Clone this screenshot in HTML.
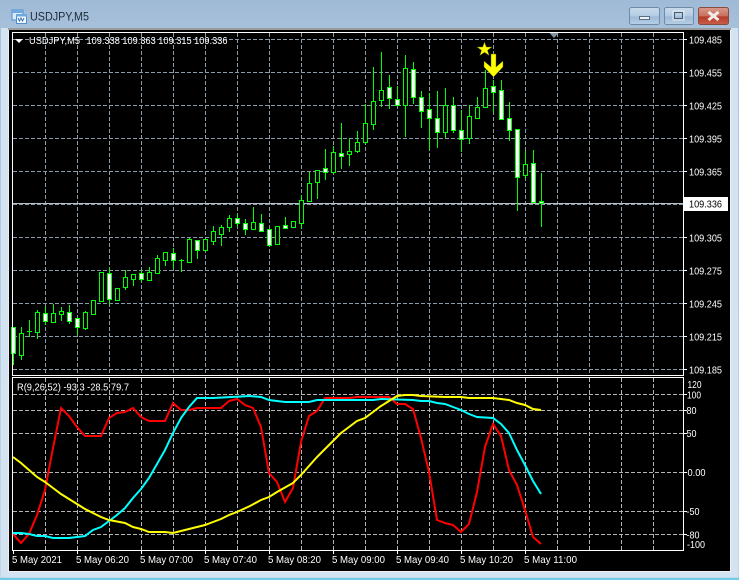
<!DOCTYPE html>
<html><head><meta charset="utf-8"><style>
html,body{margin:0;padding:0;background:#fff}
svg{display:block;font-family:"Liberation Sans",sans-serif}
text{font-size:10.5px;fill:#fff}
</style></head><body>
<svg width="741" height="580" viewBox="0 0 741 580" xmlns="http://www.w3.org/2000/svg">
<defs>
<linearGradient id="tb" x1="0" y1="0" x2="0" y2="1"><stop offset="0" stop-color="#9fbad6"/><stop offset=".06" stop-color="#a9c2dc"/><stop offset="1" stop-color="#c3d7ec"/></linearGradient>
<linearGradient id="bt" x1="0" y1="0" x2="0" y2="1"><stop offset="0" stop-color="#c9dbec"/><stop offset=".5" stop-color="#b3cbe2"/><stop offset=".55" stop-color="#9db9d6"/><stop offset="1" stop-color="#b8d0e6"/></linearGradient>
<linearGradient id="cl" x1="0" y1="0" x2="0" y2="1"><stop offset="0" stop-color="#d99a8c"/><stop offset=".5" stop-color="#c8705e"/><stop offset=".55" stop-color="#b43a26"/><stop offset="1" stop-color="#c9604c"/></linearGradient>
</defs>
<rect width="741" height="580" fill="#fff"/>
<rect x="0" y="0" width="739" height="578" fill="url(#tb)"/>
<rect x="0" y="578" width="739" height="2" fill="#6fcbe6"/>
<rect x="1" y="28" width="737" height="549" fill="#d3e3f2"/>
<rect x="8" y="28" width="723" height="2" fill="#9a9a9a"/>
<rect x="8" y="30" width="723" height="542" fill="#f0f0f0"/>
<rect x="9" y="30" width="721" height="541" fill="#000"/>

<!-- title icon -->
<g>
<rect x="12" y="10" width="11" height="10" fill="#dbe9f8" stroke="#4d8fd0"/>
<rect x="12" y="10" width="11" height="3" fill="#6fa8e0"/>
<rect x="16.500" y="14.500" width="10" height="9" fill="#f4f8fd" stroke="#4d8fd0"/>
<rect x="16" y="14" width="11" height="2.500" fill="#6fa8e0"/>
<path d="M18 18l1.500 3 1.500-3 1.500 3 1.500-3" fill="none" stroke="#3a78b8"/>
</g>
<text x="30" y="20.500" style="font-size:12px;fill:#1c2b3c" textLength="59" lengthAdjust="spacingAndGlyphs">USDJPY,M5</text>

<!-- window buttons -->
<rect x="629.500" y="7.500" width="30" height="17" rx="2" fill="url(#bt)" stroke="#6f8aa8"/>
<rect x="639.500" y="16.500" width="10" height="3" fill="#eef2f6" stroke="#5a6e84"/>
<rect x="664.500" y="7.500" width="29" height="17" rx="2" fill="url(#bt)" stroke="#6f8aa8"/>
<rect x="674.500" y="12.500" width="8" height="6" fill="none" stroke="#4a5a6c" stroke-width="1"/>
<rect x="673" y="11" width="11" height="9" fill="none" stroke="#eef2f6" stroke-width=".8"/>
<rect x="698.500" y="7.500" width="30" height="17" rx="2" fill="url(#cl)" stroke="#8a4a44"/>
<path d="M708.500 12l10 8M718.500 12l-10 8" stroke="#f2ece8" stroke-width="3"/>

<!-- main grid -->
<path d="M13 39.500H683M13 72.500H683M13 105.500H683M13 138.500H683M13 171.500H683M13 204.500H683M13 237.500H683M13 270.500H683M13 303.500H683M13 336.500H683M13 369.500H683" stroke="#8a9aaa" stroke-dasharray="4 2" fill="none"/>
<path d="M45.500 33V375M77.500 33V375M109.500 33V375M141.500 33V375M173.500 33V375M205.500 33V375M237.500 33V375M269.500 33V375M301.500 33V375M333.500 33V375M365.500 33V375M397.500 33V375M429.500 33V375M461.500 33V375M493.500 33V375M525.500 33V375M557.500 33V375M589.500 33V375M621.500 33V375M653.500 33V375" stroke="#8a9aaa" stroke-dasharray="4 2" fill="none"/>

<!-- price line -->
<path d="M13 203.500H683" stroke="#b8c0c8"/>

<!-- wicks -->
<path d="M13.500 327V365M21.500 327V360M29.500 320V337M37.500 310V339M45.500 306V325M53.500 304V323M61.500 307V321M69.500 305V324M77.500 318V335M85.500 311V330M93.500 300V314M101.500 272V301M109.500 268V305M117.500 288V300M125.500 270V290M133.500 274V286M141.500 270V282M149.500 267V280M157.500 255V273M165.500 252V266M173.500 248V269M181.500 259V272M189.500 238V262M197.500 240V259M205.500 239V250M213.500 226V245M221.500 225V246M229.500 215V232M237.500 214V227M245.500 219V235M253.500 207V229M261.500 214V231M269.500 229V247M277.500 226V244M285.500 217V228M293.500 221V227M301.500 195V229M309.500 172V201M317.500 170V199M325.500 149V180M333.500 146V172M341.500 123V169M349.500 138V166M357.500 131V153M365.500 104V144M373.500 67V130M381.500 52V107M389.500 75V109M397.500 86V105M405.500 55V137M413.500 62V104M421.500 91V128M429.500 93V150M437.500 91V148M445.500 88V138M453.500 97V133M461.500 110V152M469.500 105V144M477.500 97V119M485.500 70V107M493.500 80V113M501.500 80V119M509.500 102V141M517.500 129V211M525.500 151V179M533.500 150V202M541.500 173V227" stroke="#00ff00" fill="none"/>

<!-- bull bodies -->
<path d="M19.500 333.500h4V355.500h-4zM35.500 312.500h4V332.500h-4zM51.500 313.500h4V322.500h-4zM59.500 311.500h4V314.500h-4zM83.500 312.500h4V328.500h-4zM91.500 300.500h4V314.500h-4zM99.500 272.500h4V301.500h-4zM115.500 288.500h4V300.500h-4zM123.500 277.500h4V287.500h-4zM131.500 274.500h4V279.500h-4zM147.500 272.500h4V280.500h-4zM155.500 258.500h4V273.500h-4zM163.500 252.500h4V260.500h-4zM187.500 239.500h4V262.500h-4zM203.500 239.500h4V250.500h-4zM211.500 231.500h4V241.500h-4zM219.500 227.500h4V234.500h-4zM227.500 218.500h4V227.500h-4zM251.500 222.500h4V229.500h-4zM275.500 226.500h4V244.500h-4zM291.500 221.500h4V227.500h-4zM299.500 200.500h4V223.500h-4zM307.500 183.500h4V201.500h-4zM315.500 170.500h4V182.500h-4zM331.500 152.500h4V172.500h-4zM347.500 151.500h4V154.500h-4zM355.500 142.500h4V151.500h-4zM363.500 123.500h4V142.500h-4zM371.500 101.500h4V124.500h-4zM379.500 90.500h4V100.500h-4zM403.500 68.500h4V105.500h-4zM443.500 105.500h4V132.500h-4zM467.500 116.500h4V138.500h-4zM475.500 107.500h4V118.500h-4zM483.500 88.500h4V107.500h-4zM523.500 164.500h4V175.500h-4z" fill="#000" stroke="#00ff00"/>
<!-- bear bodies -->
<path d="M11.500 327.500h4V353.500h-4zM43.500 313.500h4V321.500h-4zM67.500 312.500h4V321.500h-4zM75.500 318.500h4V327.500h-4zM107.500 273.500h4V299.500h-4zM139.500 273.500h4V279.500h-4zM171.500 253.500h4V260.500h-4zM195.500 240.500h4V250.500h-4zM235.500 218.500h4V223.500h-4zM243.500 223.500h4V229.500h-4zM259.500 223.500h4V231.500h-4zM267.500 229.500h4V245.500h-4zM283.500 225.500h4V228.500h-4zM323.500 168.500h4V172.500h-4zM339.500 153.500h4V156.500h-4zM387.500 87.500h4V98.500h-4zM395.500 99.500h4V105.500h-4zM411.500 69.500h4V97.500h-4zM419.500 97.500h4V111.500h-4zM427.500 109.500h4V118.500h-4zM435.500 118.500h4V132.500h-4zM451.500 105.500h4V130.500h-4zM459.500 130.500h4V139.500h-4zM491.500 86.500h4V92.500h-4zM499.500 90.500h4V119.500h-4zM507.500 118.500h4V130.500h-4zM515.500 129.500h4V177.500h-4zM531.500 163.500h4V202.500h-4zM539.500 201.500h4V203.500h-4z" fill="#fff" stroke="#00ff00"/>
<!-- dojis -->
<path d="M27 331.500h5M179 260.500h5" stroke="#00ff00"/>

<!-- star & arrow -->
<polygon points="484.500,42 486.300,47 492,47 487.500,50.300 489.200,55.500 484.500,52.300 479.800,55.500 481.500,50.300 477,47 482.700,47" fill="#ffff00" stroke="#5a5a00" stroke-width=".4"/>
<polygon points="491,54 496,54 496,67 503,61 503,67 493.500,77 484,67 484,61 491,67" fill="#ffff00" stroke="#5a5a00" stroke-width=".4"/>

<!-- triangles -->
<polygon points="549.500,33 558.500,33 554,38" fill="#8493a2"/>
<polygon points="15,39 23,39 19,43" fill="#fff"/>

<!-- main frame -->
<rect x="12.500" y="32.500" width="671" height="343" fill="none" stroke="#fff"/>
<path d="M684 39.500h3M684 72.500h3M684 105.500h3M684 138.500h3M684 171.500h3M684 237.500h3M684 270.500h3M684 303.500h3M684 336.500h3M684 369.500h3" stroke="#fff"/>
<text x="29" y="44" textLength="51" lengthAdjust="spacingAndGlyphs">USDJPY,M5</text>
<text x="86.500" y="44" textLength="141" lengthAdjust="spacingAndGlyphs">109.338 109.363 109.315 109.336</text>
<text x="689" y="43.500" textLength="33" lengthAdjust="spacingAndGlyphs">109.485</text>
<text x="689" y="76.500" textLength="33" lengthAdjust="spacingAndGlyphs">109.455</text>
<text x="689" y="109.500" textLength="33" lengthAdjust="spacingAndGlyphs">109.425</text>
<text x="689" y="142.500" textLength="33" lengthAdjust="spacingAndGlyphs">109.395</text>
<text x="689" y="175.500" textLength="33" lengthAdjust="spacingAndGlyphs">109.365</text>
<text x="689" y="241.500" textLength="33" lengthAdjust="spacingAndGlyphs">109.305</text>
<text x="689" y="274.500" textLength="33" lengthAdjust="spacingAndGlyphs">109.275</text>
<text x="689" y="307.500" textLength="33" lengthAdjust="spacingAndGlyphs">109.245</text>
<text x="689" y="340.500" textLength="33" lengthAdjust="spacingAndGlyphs">109.215</text>
<text x="689" y="373.500" textLength="33" lengthAdjust="spacingAndGlyphs">109.185</text>
<rect x="684" y="197" width="44" height="14" fill="#fff"/>
<text x="689" y="207.500" textLength="33" lengthAdjust="spacingAndGlyphs" style="fill:#000">109.336</text>

<!-- indicator grid -->
<path d="M13 394.500H683M13 410.500H683M13 433.500H683M13 472.500H683M13 511.500H683M13 534.500H683" stroke="#b4b4b4" stroke-dasharray="4 2" fill="none"/>
<path d="M45.500 378V550M77.500 378V550M109.500 378V550M141.500 378V550M173.500 378V550M205.500 378V550M237.500 378V550M269.500 378V550M301.500 378V550M333.500 378V550M365.500 378V550M397.500 378V550M429.500 378V550M461.500 378V550M493.500 378V550M525.500 378V550M557.500 378V550M589.500 378V550M621.500 378V550M653.500 378V550" stroke="#b4b4b4" stroke-dasharray="4 2" fill="none"/>

<!-- indicator lines -->
<polyline fill="none" stroke="#ff0000" stroke-width="2" stroke-linejoin="miter" points="13,534 21,543 29,534 37,515 45,490 53,448 61,408 69,416 77,427 85,436 101,436 109,418 117,413 125,412 133,408 141,417 149,421 165,421 173,403 181,410 189,410 197,408 221,408 229,401 237,399 245,405 253,408 261,427 269,473 277,482 285,502 293,488 301,442 309,416 317,411 325,398 349,398 357,397 389,397 397,404 405,404 413,409 421,438 429,472 437,520 445,523 453,525 461,532 469,524 477,492 485,447 493,424 501,436 509,470 517,485 525,510 533,537 541,544"/>
<polyline fill="none" stroke="#00ffff" stroke-width="2" points="13,533 21,533 29,534 37,536 45,536 53,538 69,538 77,537 85,536 93,530 101,527 109,521 117,515 125,508 133,498 141,489 149,478 157,464 165,450 173,433 181,418 189,407 197,398 213,398 250,396 261,397 269,400 285,402 309,402 317,400 373,400 381,399 413,400 421,401 429,401 437,403 445,404 453,407 461,410 469,414 477,417 493,418 501,424 509,433 517,450 525,465 533,481 541,494"/>
<polyline fill="none" stroke="#ffff00" stroke-width="2" points="13,457 21,463 29,470 37,477 45,482 53,488 61,494 69,499 77,504 85,509 93,513 101,517 109,520 125,523 133,527 141,529 149,532 165,532 173,533 181,531 189,529 205,525 213,522 221,519 229,515 237,512 250,506 261,500 269,497 277,492 293,483 301,475 309,466 317,457 325,449 333,441 341,433 349,427 357,421 365,418 373,412 381,406 389,401 397,396 405,395 413,395 421,396 445,397 461,397 469,398 493,398 501,399 509,400 517,403 525,405 533,409 541,410"/>

<!-- indicator frame -->
<rect x="12.500" y="377.500" width="671" height="173" fill="none" stroke="#fff"/>
<path d="M684 394.500h3M684 410.500h3M684 433.500h3M684 472.500h3M684 511.500h3M684 534.500h3M13.500 551v3M77.500 551v3M141.500 551v3M205.500 551v3M269.500 551v3M333.500 551v3M397.500 551v3M461.500 551v3M525.500 551v3" stroke="#fff"/>
<text x="17" y="390.500" textLength="112" lengthAdjust="spacingAndGlyphs">R(9,26,52) -93.3 -28.5 79.7</text>
<text x="687.500" y="388" textLength="14" lengthAdjust="spacingAndGlyphs">120</text>
<text x="687" y="398.500" textLength="14" lengthAdjust="spacingAndGlyphs">100</text>
<text x="686.500" y="414" textLength="10" lengthAdjust="spacingAndGlyphs">80</text>
<text x="686.500" y="437" textLength="10" lengthAdjust="spacingAndGlyphs">50</text>
<text x="687.500" y="476" textLength="18" lengthAdjust="spacingAndGlyphs">0.00</text>
<text x="686.500" y="515" textLength="13" lengthAdjust="spacingAndGlyphs">-50</text>
<text x="686.500" y="538.500" textLength="13" lengthAdjust="spacingAndGlyphs">-80</text>
<text x="687" y="548" textLength="18" lengthAdjust="spacingAndGlyphs">-100</text>
<text x="12" y="563" textLength="50" lengthAdjust="spacingAndGlyphs">5 May 2021</text>
<text x="76" y="563" textLength="53" lengthAdjust="spacingAndGlyphs">5 May 06:20</text>
<text x="140" y="563" textLength="53" lengthAdjust="spacingAndGlyphs">5 May 07:00</text>
<text x="204" y="563" textLength="53" lengthAdjust="spacingAndGlyphs">5 May 07:40</text>
<text x="268" y="563" textLength="53" lengthAdjust="spacingAndGlyphs">5 May 08:20</text>
<text x="332" y="563" textLength="53" lengthAdjust="spacingAndGlyphs">5 May 09:00</text>
<text x="396" y="563" textLength="53" lengthAdjust="spacingAndGlyphs">5 May 09:40</text>
<text x="460" y="563" textLength="53" lengthAdjust="spacingAndGlyphs">5 May 10:20</text>
<text x="524" y="563" textLength="53" lengthAdjust="spacingAndGlyphs">5 May 11:00</text>
</svg>
</body></html>
